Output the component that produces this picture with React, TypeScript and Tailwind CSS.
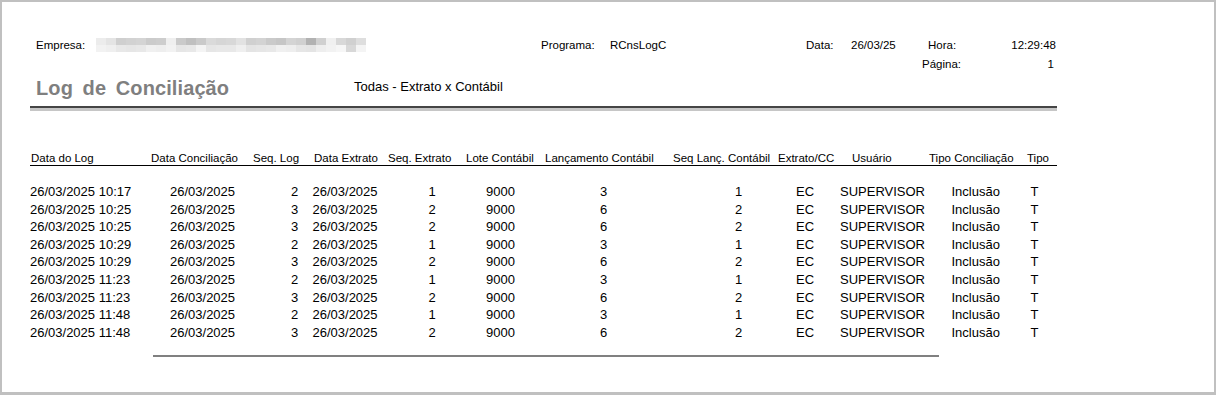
const blurTop = [
  "bg-[#ececec]", "bg-[#e4e4e4]", "bg-[#cfcfcf]", "bg-[#d2d2d2]", "bg-[#d4d4d4]", "bg-[#cbcbcb]", "bg-[#cdcdcd]",
  "bg-[#efefef]", "bg-[#cacaca]", "bg-[#c0c0c0]", "bg-[#cacaca]", "bg-[#dadada]", "bg-[#d6d6d6]", "bg-[#d8d8d8]",
  "bg-[#e2e2e2]", "bg-[#d0d0d0]", "bg-[#d3d3d3]", "bg-[#cacaca]", "bg-[#c6c6c6]", "bg-[#d4d4d4]", "bg-[#d0d0d0]",
  "bg-[#b2b2b2]", "bg-[#d0d0d0]", "bg-[#f0f0f0]", "bg-[#d8d8d8]", "bg-[#d0d0d0]", "bg-[#dedede]",
];
const blurBottom = [
  "bg-[#f2f2f2]", "bg-[#efefef]", "bg-[#e8e8e8]", "bg-[#e6e6e6]", "bg-[#e8e8e8]", "bg-[#f0f0f0]", "bg-[#eeeeee]",
  "bg-[#f2f2f2]", "bg-[#e6e6e6]", "bg-[#e8e8e8]", "bg-[#f4f4f4]", "bg-[#e6e6e6]", "bg-[#e8e8e8]", "bg-[#e8e8e8]",
  "bg-[#efefef]", "bg-[#e4e4e4]", "bg-[#e6e6e6]", "bg-[#e8e8e8]", "bg-[#f0f0f0]", "bg-[#eeeeee]", "bg-[#e6e6e6]",
  "bg-[#e4e4e4]", "bg-[#eeeeee]", "bg-[#f2f2f2]", "bg-[#f6f6f6]", "bg-[#d8d8d8]", "bg-[#f4f4f4]",
];

// header label + left offset inside its column, data left offset
const columns = [
  { label: "Data do Log", head: "pl-[1px]", cell: "pl-0" },
  { label: "Data Conciliação", head: "pl-[11px]", cell: "pl-[30px]" },
  { label: "Seq. Log", head: "pl-[8px]", cell: "pl-[46px]" },
  { label: "Data Extrato", head: "pl-[9px]", cell: "pl-[7.5px]" },
  { label: "Seq. Extrato", head: "pl-[4px]", cell: "pl-[44.5px]" },
  { label: "Lote Contábil", head: "pl-[6px]", cell: "pl-[26px]" },
  { label: "Lançamento Contábil", head: "pl-[5px]", cell: "pl-[60px]" },
  { label: "Seq Lanç. Contábil", head: "pl-[8px]", cell: "pl-[70px]" },
  { label: "Extrato/CC", head: "pl-[3px]", cell: "pl-[21px]" },
  { label: "Usuário", head: "pl-[14px]", cell: "pl-[2px]" },
  { label: "Tipo Conciliação", head: "pl-[4px]", cell: "pl-[26.5px]" },
  { label: "Tipo", head: "pl-[7px]", cell: "pl-[10.5px]" },
];

const logs: [string, string, string, string, string][] = [
  ["26/03/2025 10:17", "2", "1", "3", "1"],
  ["26/03/2025 10:25", "3", "2", "6", "2"],
  ["26/03/2025 10:25", "3", "2", "6", "2"],
  ["26/03/2025 10:29", "2", "1", "3", "1"],
  ["26/03/2025 10:29", "3", "2", "6", "2"],
  ["26/03/2025 11:23", "2", "1", "3", "1"],
  ["26/03/2025 11:23", "3", "2", "6", "2"],
  ["26/03/2025 11:48", "2", "1", "3", "1"],
  ["26/03/2025 11:48", "3", "2", "6", "2"],
];

const gridCols = "grid grid-cols-[110px_105px_60px_79px_76px_80px_125px_110px_63px_87px_95px_37px]";

function Redacted() {
  return (
    <div className="flex h-[14px] w-[270px] flex-col">
      <div className="flex h-[7px]">
        {blurTop.map((c, i) => (
          <div key={i} className={`h-full w-[10px] ${c}`} />
        ))}
      </div>
      <div className="flex h-[7px]">
        {blurBottom.map((c, i) => (
          <div key={i} className={`h-full w-[10px] ${c}`} />
        ))}
      </div>
    </div>
  );
}

export default function App() {
  return (
    <div className="h-[395px] w-[1216px] overflow-hidden border-2 border-b-[3px] border-[#c0c0c0] bg-white font-['Liberation_Sans',Arial,sans-serif] text-black">
      {/* report header */}
      <div className="mt-[36px] ml-[34px] flex text-[11.5px] leading-[14px] whitespace-nowrap">
        <div className="w-[60px]">Empresa:</div>
        <Redacted />
        <div className="w-[175px]" />
        <div className="w-[69px]">Programa:</div>
        <div className="w-[196px]">RCnsLogC</div>
        <div className="w-[45px]">Data:</div>
        <div className="w-[77px]">26/03/25</div>
        <div className="w-[60px]">Hora:</div>
        <div className="w-[68px] text-right">12:29:48</div>
      </div>
      <div className="mt-[5px] ml-[920px] flex text-[11.5px] leading-[14px] whitespace-nowrap">
        <div className="w-[66px]">Página:</div>
        <div className="w-[66px] text-right">1</div>
      </div>

      <div className="mt-[5px] ml-[34px] flex items-start whitespace-nowrap">
        <div className="w-[318px] text-[20px] leading-[24px] font-bold tracking-[0.1px] text-[#7f7f7f] [word-spacing:4px]">
          Log de Conciliação
        </div>
        <div className="mt-[3px] text-[13px] leading-[16px]">Todas - Extrato x Contábil</div>
      </div>

      <div className="mt-[6px] ml-[28px] w-[1027px]">
        <div className="h-[2px] bg-[#454545]" />
        <div className="h-[3px] bg-[#c6c6c6]" />
      </div>

      {/* table */}
      <div className="mt-[40px] ml-[28px] w-[1027px] whitespace-nowrap">
        <div className={`${gridCols} h-[15px] border-b border-black text-[11.5px] leading-[14px]`}>
          {columns.map((c) => (
            <div key={c.label} className={c.head}>
              {c.label}
            </div>
          ))}
        </div>
        <div className="mt-[17px]">
          {logs.map(([when, seq, seqExt, lanc, seqLanc], r) => {
            const cells = [when, "26/03/2025", seq, "26/03/2025", seqExt, "9000", lanc, seqLanc, "EC", "SUPERVISOR", "Inclusão", "T"];
            return (
              <div key={r} className={`${gridCols} h-[17.6px] text-[13px] leading-[17.6px]`}>
                {cells.map((v, i) => (
                  <div key={i} className={columns[i].cell}>
                    {v}
                  </div>
                ))}
              </div>
            );
          })}
        </div>
      </div>

      <div className="mt-[14px] ml-[151px] h-[2px] w-[786px] bg-[#808080]" />
    </div>
  );
}
